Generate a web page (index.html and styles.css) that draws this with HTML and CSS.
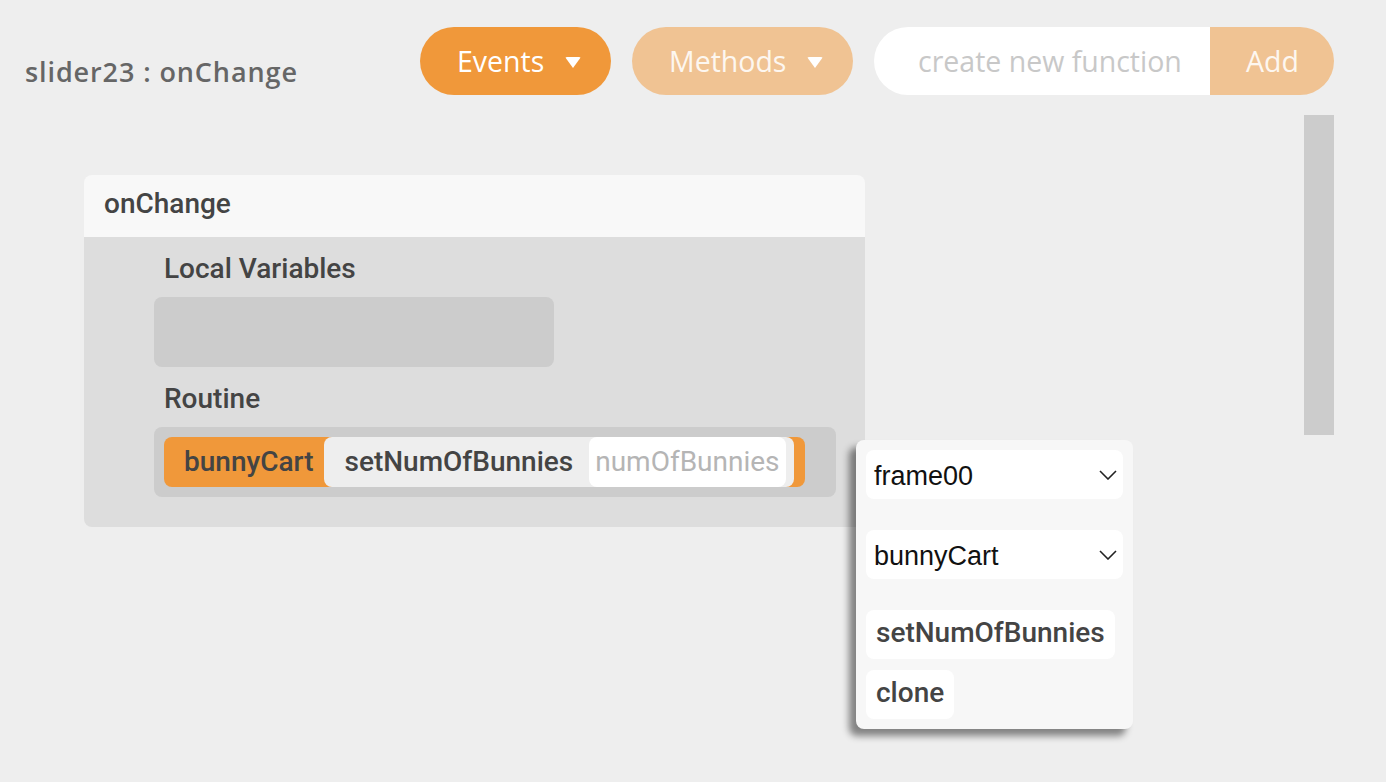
FILE: index.html
```html
<!DOCTYPE html>
<html lang="en">

<head>
    <meta charset="UTF-8">
    <meta name="viewport" content="width=device-width, initial-scale=1.0">
    <title>slider23 : onChange</title>
    <link rel="stylesheet" href="styles.css">
</head>

<body>
    <!-- top bar -->
    <div class="topbar">
        <div class="page-title">slider23 : onChange</div>
        <div class="toolbar">
            <div class="pill-btn events">Events <span class="caret"></span></div>
            <div class="pill-btn methods">Methods <span class="caret"></span></div>
            <div class="new-fn">
                <input class="new-fn-input" type="text" placeholder="create new function">
                <div class="new-fn-add">Add</div>
            </div>
        </div>
    </div>

    <!-- workspace -->
    <div class="workspace">
        <div class="fn-card">
            <div class="fn-card-head">onChange</div>
            <div class="fn-card-body">
                <div class="fn-label">Local Variables</div>
                <div class="var-box"></div>
                <div class="fn-label">Routine</div>
                <div class="routine-box">
                    <div class="stmt">
                        <span class="stmt-obj">bunnyCart</span>
                        <div class="stmt-call">
                            <span class="stmt-method">setNumOfBunnies</span>
                            <span class="stmt-arg">numOfBunnies</span>
                        </div>
                    </div>
                </div>
            </div>
        </div>

        <div class="scroll-thumb"></div>

        <!-- block picker -->
        <div class="picker">
            <div class="picker-select">frame00
                <svg class="chev" width="18" height="10" viewBox="0 0 18 10"><path d="M1 1l8 8 8-8" fill="none" stroke="#222" stroke-width="1.6"/></svg>
            </div>
            <div class="picker-select">bunnyCart
                <svg class="chev" width="18" height="10" viewBox="0 0 18 10"><path d="M1 1l8 8 8-8" fill="none" stroke="#222" stroke-width="1.6"/></svg>
            </div>
            <div class="picker-items">
                <div class="picker-item">setNumOfBunnies</div>
                <div class="picker-item">clone</div>
            </div>
        </div>
    </div>
</body>

</html>
```

FILE: styles.css
```css
body {
    margin: 0;
    background: #eeeeee;
    font-family: Roboto, 'Liberation Sans', sans-serif;
    color: #444;
}

/* top bar */
.topbar {
    display: flex;
    align-items: center;
    justify-content: space-between;
    padding: 27px 52px 0 25px;
}

.page-title {
    font-family: 'Open Sans', sans-serif;
    font-weight: 600;
    font-size: 27px;
    letter-spacing: 0.9px;
    color: #666;
    padding-top: 20px;
}

.toolbar {
    display: flex;
    gap: 21px;
}

.pill-btn {
    height: 68px;
    border-radius: 34px;
    display: flex;
    align-items: center;
    font-family: 'Open Sans', sans-serif;
    font-size: 28.5px;
    color: #fff;
    box-sizing: border-box;
}

.events {
    background: #f0983a;
    width: 191px;
    padding-left: 37px;
}

.methods {
    background: #f0c393;
    width: 221px;
    padding-left: 37px;
    color: #fdf7f0;
}

.caret {
    display: inline-block;
    width: 0;
    height: 0;
    border-left: 8px solid transparent;
    border-right: 8px solid transparent;
    border-top: 11px solid #fff;
    border-radius: 2px;
    margin-left: 21px;
    margin-top: 2px;
}

.new-fn {
    display: flex;
    height: 68px;
}

.new-fn-input {
    width: 336px;
    box-sizing: border-box;
    border: none;
    outline: none;
    background: #fff;
    border-radius: 34px 0 0 34px;
    padding-left: 44px;
    font-family: 'Open Sans', sans-serif;
    font-size: 28.5px;
    color: #444;
}

.new-fn-input::placeholder {
    color: #c8c8c8;
}

.new-fn-add {
    width: 124px;
    background: #f0c393;
    border-radius: 0 34px 34px 0;
    display: flex;
    align-items: center;
    padding-left: 36px;
    box-sizing: border-box;
    font-family: 'Open Sans', sans-serif;
    font-size: 28.5px;
    color: #fdf7f0;
}

/* workspace */
.workspace {
    position: relative;
    min-height: 687px;
    display: flex;
    justify-content: space-between;
    align-items: flex-start;
    padding: 0 52px 0 84px;
}

.scroll-thumb {
    width: 30px;
    height: 320px;
    background: #cccccc;
    margin-top: 20px;
}

.fn-card {
    width: 781px;
    margin-top: 80px;
    border-radius: 8px;
    overflow: hidden;
}

.fn-card-head {
    background: #f8f8f8;
    height: 62px;
    line-height: 58px;
    padding-left: 20px;
    font-size: 28px;
    font-weight: 500;
}

.fn-card-body {
    background: #dddddd;
    padding: 0 30px 30px 70px;
}

.fn-label {
    height: 60px;
    line-height: 64px;
    padding-left: 10px;
    font-size: 28px;
    font-weight: 500;
}

.var-box {
    width: 400px;
    height: 70px;
    background: #cccccc;
    border-radius: 8px;
}

.routine-box {
    width: 682px;
    box-sizing: border-box;
    background: #cccccc;
    border-radius: 8px;
    padding: 10px;
}

.stmt {
    display: inline-flex;
    align-items: stretch;
    height: 50px;
    background: #f0983a;
    border-radius: 8px;
    padding-right: 11px;
    font-size: 28px;
    font-weight: 500;
}

.stmt-obj {
    padding: 0 11px 0 20px;
    line-height: 50px;
}

.stmt-call {
    display: flex;
    background: #eeeeee;
    border-radius: 8px;
    padding-right: 8px;
}

.stmt-method {
    padding: 0 16px 0 20px;
    line-height: 50px;
}

.stmt-arg {
    background: #fff;
    border-radius: 8px;
    padding: 0 6px 0 6px;
    line-height: 50px;
    color: #b5b5b5;
    font-weight: 400;
}

/* block picker */
.picker {
    position: absolute;
    left: 856px;
    top: 345px;
    width: 277px;
    box-sizing: border-box;
    padding: 10px;
    background: #f7f7f7;
    border-radius: 8px;
    box-shadow: -7px 7px 7px rgba(0, 0, 0, 0.45);
}

.picker-select {
    display: flex;
    align-items: center;
    justify-content: space-between;
    height: 49px;
    box-sizing: border-box;
    margin-bottom: 31px;
    padding: 3px 6px 0 8px;
    background: #fff;
    border-radius: 8px;
    font-family: 'Liberation Sans', Arial, sans-serif;
    font-size: 27px;
    color: #111;
}

.chev {
    margin-top: -2px;
}

.picker-items {
    display: flex;
    flex-direction: column;
    align-items: flex-start;
    gap: 11px;
}

.picker-item {
    height: 49px;
    line-height: 46px;
    padding: 0 10px;
    background: #fff;
    border-radius: 8px;
    font-size: 28px;
    font-weight: 500;
}
```
